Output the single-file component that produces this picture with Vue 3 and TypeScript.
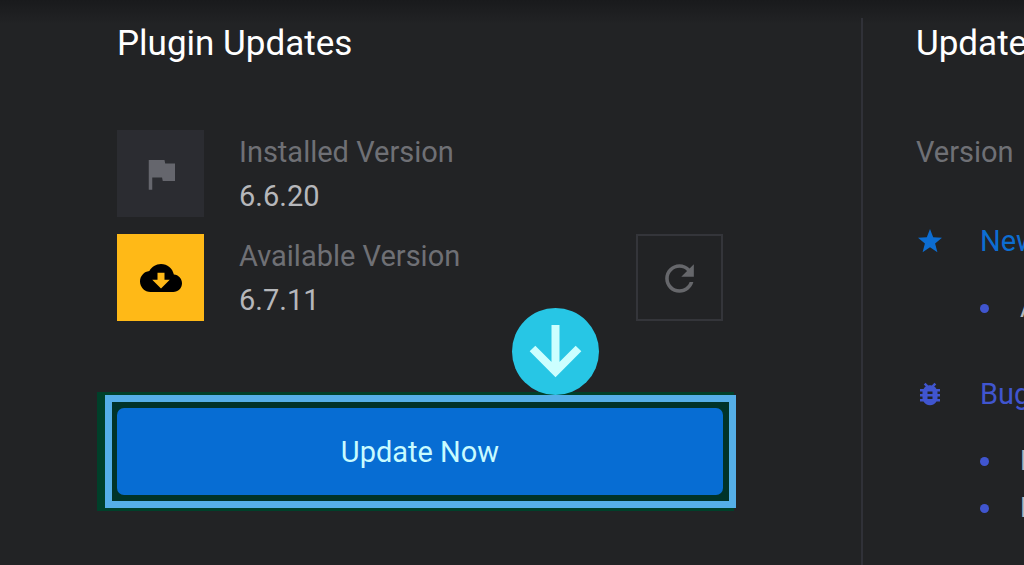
<script setup lang="ts">
interface ChangeGroup {
  title: string
  icon: 'star' | 'bug'
  items: string[]
}

const installedVersion = '6.6.20'
const availableVersion = '6.7.11'

const groups: ChangeGroup[] = [
  { title: 'New', icon: 'star', items: ['A'] },
  { title: 'Bug', icon: 'bug', items: ['F', 'F'] },
]
</script>

<template>
  <main class="page">
    <section class="updates">
      <h2 class="title">Plugin Updates</h2>
      <div class="versions">
        <div class="version">
          <span class="tile">
            <svg class="icon" viewBox="0 0 24 24" aria-hidden="true">
              <path d="M14.4 6L14 4H5v17h2v-7h5.6l.4 2h7V6z" />
            </svg>
          </span>
          <dl class="facts">
            <dt>Installed Version</dt>
            <dd>{{ installedVersion }}</dd>
          </dl>
        </div>
        <div class="version">
          <span class="tile tile-new">
            <svg class="icon" viewBox="0 0 24 24" aria-hidden="true">
              <path d="M19.35 10.04C18.67 6.59 15.64 4 12 4 9.11 4 6.6 5.64 5.35 8.04 2.34 8.36 0 10.91 0 14c0 3.31 2.69 6 6 6h13c2.76 0 5-2.24 5-5 0-2.64-2.05-4.78-4.65-4.96zM17 13l-5 5-5-5h3V9h4v4h3z" />
            </svg>
          </span>
          <dl class="facts">
            <dt>Available Version</dt>
            <dd>{{ availableVersion }}</dd>
          </dl>
          <button class="refresh" type="button" aria-label="Check for updates">
            <svg class="icon" viewBox="0 0 24 24" aria-hidden="true">
              <path d="M17.65 6.35C16.2 4.9 14.21 4 12 4c-4.42 0-7.99 3.58-7.99 8s3.57 8 7.99 8c3.73 0 6.84-2.55 7.73-6h-2.08c-.82 2.33-3.04 4-5.65 4-3.31 0-6-2.69-6-6s2.69-6 6-6c1.66 0 3.14.69 4.22 1.78L13 11h7V4l-2.35 2.35z" />
            </svg>
          </button>
        </div>
      </div>
      <div class="highlight">
        <span class="pointer">
          <svg viewBox="0 0 87 87" aria-hidden="true">
            <path d="M43.5 17v48M20.500 40.500L43.500 63.500l23-23" />
          </svg>
        </span>
        <button class="update" type="button">Update Now</button>
      </div>
    </section>

    <section class="info">
      <h2 class="title">Update</h2>
      <p class="release">Version</p>
      <div v-for="group in groups" :key="group.title" class="group">
        <h3 class="group-title">
          <svg v-if="group.icon === 'star'" class="mark" viewBox="0 0 24 24" aria-hidden="true">
            <path d="M12 0l3.200 8.300 8.800.500-6.900 5.600 2.300 8.800L12 18.300 4.600 23.200l2.300-8.800L0 8.800l8.800-.500z" />
          </svg>
          <svg v-else class="mark bug" viewBox="0 0 24 24" aria-hidden="true">
            <path d="M20 8h-2.810c-.45-.78-1.070-1.450-1.820-1.960L17 4.410 15.590 3l-2.170 2.170C12.960 5.060 12.490 5 12 5s-.96.06-1.410.17L8.410 3 7 4.410l1.620 1.630C7.880 6.550 7.260 7.220 6.810 8H4v2h2.090c-.05.33-.09.66-.09 1v1H4v2h2v1c0 .34.04.67.09 1H4v2h2.810c1.040 1.790 2.970 3 5.190 3s4.150-1.210 5.190-3H20v-2h-2.090c.05-.33.09-.66.09-1v-1h2v-2h-2v-1c0-.34-.04-.67-.09-1H20V8zm-6 8h-4v-2h4v2zm0-4h-4v-2h4v2z" />
          </svg>
          <span>{{ group.title }}</span>
        </h3>
        <ul class="items">
          <li v-for="(item, index) in group.items" :key="index">{{ item }}</li>
        </ul>
      </div>
    </section>
  </main>
</template>

<style>
body {
  margin: 0;
  background: #222325;
}
</style>

<style scoped>
.page {
  box-sizing: border-box;
  display: grid;
  grid-template-columns: minmax(0, 863fr) minmax(0, 161fr);
  min-height: 100vh;
  padding-top: 18px;
  overflow: hidden;
  background: linear-gradient(#191a1c, #222325 24px);
  color: #b6b7bb;
  font-family: Roboto, "Liberation Sans", sans-serif;
  font-size: 29px;
  line-height: 44px;
}

.updates {
  padding: 6px 138px 0 117px;
  border-right: 2px solid #303138;
}

.title {
  margin: 0;
  color: #fff;
  font-size: 35px;
  font-weight: 400;
  line-height: 40px;
}

.versions {
  display: flex;
  flex-direction: column;
  gap: 16px;
  margin-top: 66px;
}

.version {
  display: flex;
  align-items: flex-start;
  gap: 35px;
}

.tile,
.refresh {
  box-sizing: border-box;
  display: flex;
  flex: none;
  align-items: center;
  justify-content: center;
  width: 87px;
  height: 87px;
}

.tile {
  background: #2b2c31;
  color: #65666d;
}

.tile-new {
  background: #ffb917;
  color: #000;
}

.icon {
  width: 42px;
  height: 42px;
  fill: currentColor;
}

.facts {
  flex: 1;
  margin: 0;
}

.facts dt {
  color: #6f7075;
}

.facts dd {
  margin: 0;
}

.refresh {
  padding: 2px 0 0;
  border: 2px solid #34353a;
  background: transparent;
  color: #66676b;
}

.refresh .icon {
  width: 43px;
  height: 43px;
}

.highlight {
  position: relative;
  margin: 73px -13px 0 -12px;
  padding: 6px 6px 6px 5px;
  border: 7px solid #55afe8;
  background: #003329;
  box-shadow: -5px 0 0 3px #00402a;
}

.pointer {
  position: absolute;
  bottom: calc(100% + 7px);
  left: 400px;
  width: 87px;
  height: 87px;
  border-radius: 50%;
  background: #27c6e5;
}

.pointer svg {
  display: block;
  fill: none;
  stroke: #ccffff;
  stroke-width: 8px;
}

.update {
  display: block;
  width: 100%;
  height: 87px;
  padding: 0;
  border: 0;
  border-radius: 7px;
  background: #076dd3;
  color: #c8fbff;
  font: inherit;
}

.info {
  padding: 6px 0 0 53px;
  white-space: nowrap;
}

.release {
  margin: 66px 0 45px;
  color: #6f7075;
}

.group {
  margin-bottom: 40px;
  color: #0d6dd2;
}

.group + .group {
  color: #4055cf;
}

.group-title {
  display: flex;
  align-items: center;
  gap: 38px;
  margin: 0;
  font-size: 29px;
  font-weight: 400;
}

.mark {
  flex: none;
  width: 24px;
  height: 24px;
  margin-left: 2px;
  fill: currentColor;
}

.bug {
  width: 30px;
  height: 30px;
  margin: 0 -3px 0 -1px;
}

.items {
  margin: 22px 0 0 64px;
  padding: 0;
  font-size: 27px;
  line-height: 47px;
  list-style: none;
}

.items li {
  display: flex;
  align-items: center;
  gap: 31px;
  color: #b6b7bb;
}

.items li::before {
  flex: none;
  width: 9px;
  height: 9px;
  border-radius: 50%;
  background: #4055cf;
  content: "";
}
</style>
